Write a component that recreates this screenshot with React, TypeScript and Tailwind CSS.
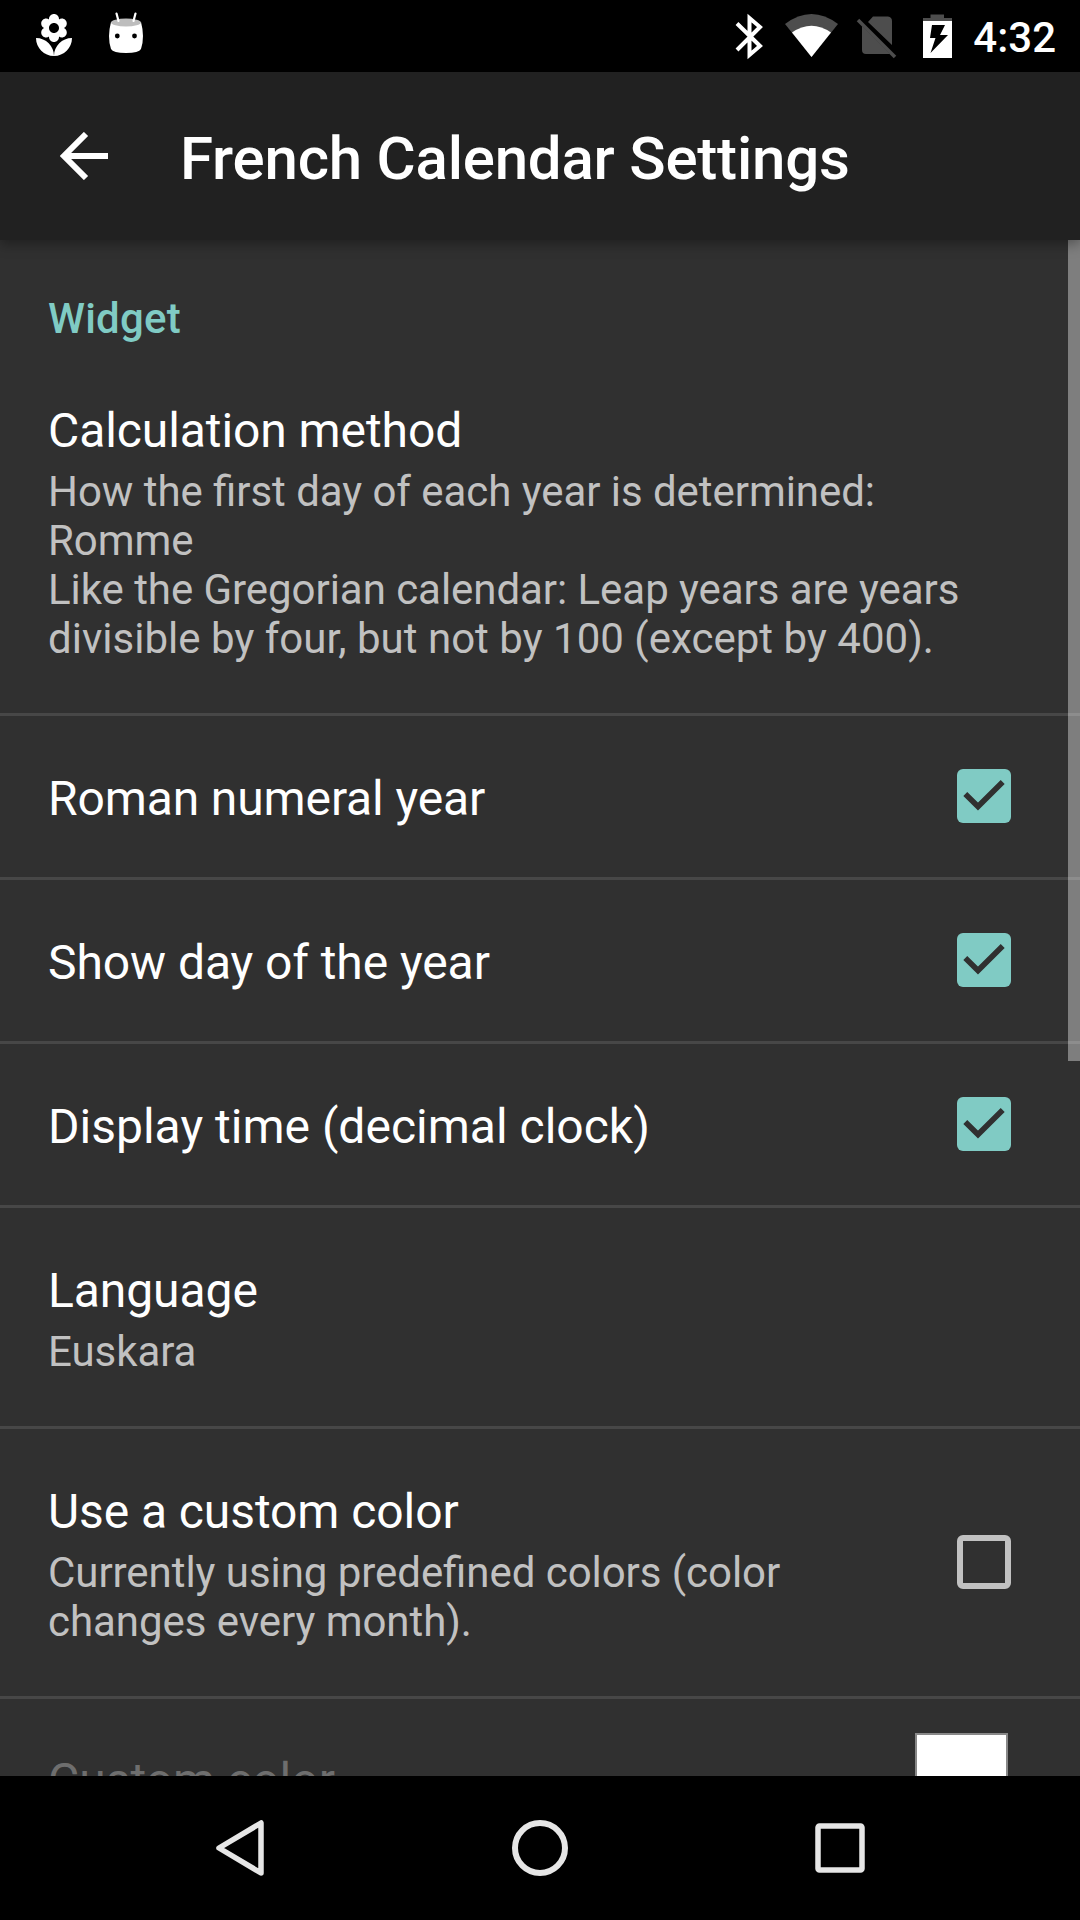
import React from "react";

function Check({ on }: { on: boolean }) {
  return (
    <svg viewBox="0 0 54 54" className="mb-px h-[54px] w-[54px] shrink-0">
      {on ? (
        <>
          <rect width="54" height="54" rx="6" fill="#80cbc4" />
          <path d="M8.3 25 21 37.500 45.700 13" fill="none" stroke="#303030" strokeWidth="5.600" />
        </>
      ) : (
        <path fillRule="evenodd" fill="#c1c1c1" d="M6 0H48a6 6 0 0 1 6 6V48a6 6 0 0 1-6 6H6a6 6 0 0 1-6-6V6a6 6 0 0 1 6-6zM6 6V48H48V6z" />
      )}
    </svg>
  );
}

type RowProps = { title: string; lines?: string[]; checked?: boolean; size: string; titleSpacing?: string };

function Row({ title, lines, checked, size, titleSpacing = "tracking-[-0.08px]" }: RowProps) {
  return (
    <div className={`flex shrink-0 items-center justify-between border-b-3 border-[#474747] pl-12 pr-[69px] ${size}`}>
      <div className="pt-[5px]">
        <div className={`text-[48px] leading-[56px] whitespace-nowrap ${titleSpacing}`}>{title}</div>
        {lines && (
          <div className="mt-2 text-[42px] leading-[49px] whitespace-nowrap text-[#c1c1c1] [font-feature-settings:'liga'_1]">
            {lines.map((l) => (
              <div key={l} className={l.startsWith("divisible") ? "tracking-[0.02px]" : "tracking-[-0.05px]"}>{l}</div>
            ))}
          </div>
        )}
      </div>
      {checked !== undefined && <Check on={checked} />}
    </div>
  );
}

function StatusBar() {
  return (
    <div className="flex h-[72px] shrink-0 items-start justify-between bg-black">
      <svg viewBox="0 0 160 72" className="h-[72px] w-40">
        <path transform="translate(30 12) scale(2)" fill="#fff" d="M12 22c4.97 0 9-4.03 9-9-4.97 0-9 4.03-9 9zM5.6 10.25c0 1.38 1.12 2.5 2.5 2.5.53 0 1.01-.16 1.42-.44l-.02.19c0 1.38 1.12 2.5 2.5 2.5s2.5-1.12 2.5-2.5l-.02-.19c.4.28.89.44 1.42.44 1.38 0 2.5-1.12 2.5-2.5 0-1-.59-1.85-1.43-2.25.84-.4 1.43-1.25 1.43-2.25 0-1.38-1.12-2.5-2.5-2.5-.53 0-1.01.16-1.42.44l.02-.19C14.5 2.12 13.38 1 12 1S9.5 2.12 9.5 3.5l.02.19c-.4-.28-.89-.44-1.42-.44-1.38 0-2.5 1.12-2.5 2.5 0 1 .59 1.85 1.43 2.25-.84.4-1.43 1.25-1.43 2.25zM12 5.5c1.38 0 2.5 1.12 2.5 2.5s-1.12 2.5-2.5 2.5S9.5 9.38 9.5 8s1.12-2.5 2.5-2.5zM3 13c0 4.97 4.03 9 9 9 0-4.97-4.03-9-9-9z" />
        <path fill="#fff" d="M111 22Q126 30 141 22Q145 37 141 49Q139 53 126 53Q113 53 111 49Q107 37 111 22z" />
        <ellipse cx="126" cy="22.5" rx="15" ry="4" fill="#bdbdbd" />
        <path d="M116.5 13.5 118.5 21M135.5 13.5 133.500 21" stroke="#fff" strokeWidth="2.2" strokeLinecap="round" />
        <circle cx="117.3" cy="36" r="2.4" />
        <circle cx="134.5" cy="36" r="2.4" />
      </svg>
      <div className="flex pr-[24px]">
        <svg viewBox="730 0 238 72" className="h-[72px] w-[238px]">
          <path d="M737 23.5 760 46 749.5 55V18L760 27 737 50" fill="none" stroke="#fff" strokeWidth="4" />
          <path fill="#4d4d4d" d="M785 24Q811.5 4 838 24L811.5 57z" />
          <path fill="#fff" d="M792 32.5Q811.5 19 831 32.5L811.5 57z" />
          <path fill="#4d4d4d" d="M868 22 873 16.500H888Q892 17 892 21V45zM862 26 890 54H866Q862 54 862 50z" />
          <path d="M858 20 895 57" stroke="#4d4d4d" strokeWidth="3.5" />
          <path fill="#4d4d4d" d="M930.5 14.5H944V18H952V22H923V18H930.5z" />
          <path fillRule="evenodd" fill="#fff" d="M923 21H952V58H923zM932 25 930 38H935.5L930.5 53 948 35H940L945 25z" />
        </svg>
        <div className="pl-[5px] pt-[12px] text-[42px] leading-[52px] font-medium">4:32</div>
      </div>
    </div>
  );
}

export default function App() {
  return (
    <div className="flex h-[1920px] w-[1080px] flex-col overflow-hidden bg-[#303030] font-['Roboto',sans-serif] text-white">
      <StatusBar />
      <div className="z-10 flex h-[168px] shrink-0 items-center bg-[#212121] pl-[60px] shadow-[0_4px_12px_rgba(0,0,0,0.35)]">
        <svg viewBox="0 0 48 48" className="h-12 w-[120px]" preserveAspectRatio="xMinYMid meet">
          <path d="M48 24H5M26 2 4 24 26 46" fill="none" stroke="#fff" strokeWidth="6" />
        </svg>
        <h1 className="pt-[5px] text-[60px] font-medium tracking-[-0.21px]">French Calendar Settings</h1>
      </div>
      <div className="relative flex min-h-0 grow flex-col overflow-hidden">
        <div className="h-[132px] shrink-0 pl-12 pt-[54px] text-[42px] leading-[49px] font-medium tracking-[0.2px] text-[#80cbc4]">Widget</div>
        <Row title="Calculation method" size="h-[344px] pb-[24px]" lines={["How the first day of each year is determined:", "Romme", "Like the Gregorian calendar: Leap years are years", "divisible by four, but not by 100 (except by 400)."]} />
        <Row title="Roman numeral year" checked size="h-[164px]" titleSpacing="tracking-[-0.12px]" />
        <Row title="Show day of the year" checked size="h-[164px]" />
        <Row title="Display time (decimal clock)" checked size="h-[164px]" titleSpacing="tracking-[0.01px]" />
        <Row title="Language" lines={["Euskara"]} size="h-[221px]" />
        <Row title="Use a custom color" lines={["Currently using predefined colors (color", "changes every month)."]} checked={false} size="h-[270px]" />
        <div className="flex shrink-0 items-start justify-between pl-12 pr-[72px] pt-[34px]">
          <div className="pt-[20px] text-[48px] leading-[56px] text-[#6e6e6e]">Custom color</div>
          <div className="h-[93px] w-[93px] border-2 border-[#888] bg-white" />
        </div>
        <div className="absolute top-0 right-0 h-[821px] w-3 bg-white/38" />
      </div>
      <div className="z-10 flex h-36 shrink-0 items-center justify-center gap-[200px] bg-black">
        <svg viewBox="0 0 100 100" className="h-[100px] w-[100px]" fill="none" stroke="#e6e6e6" strokeWidth="5.5" strokeLinejoin="round">
          <path d="M71 25V75L29 50z" />
        </svg>
        <svg viewBox="0 0 100 100" className="h-[100px] w-[100px]" fill="none" stroke="#e6e6e6" strokeWidth="6">
          <circle cx="50" cy="50" r="25" />
        </svg>
        <svg viewBox="0 0 100 100" className="h-[100px] w-[100px]" fill="none" stroke="#e6e6e6" strokeWidth="5.5">
          <rect x="28" y="28" width="44" height="44" rx="1.5" />
        </svg>
      </div>
    </div>
  );
}
